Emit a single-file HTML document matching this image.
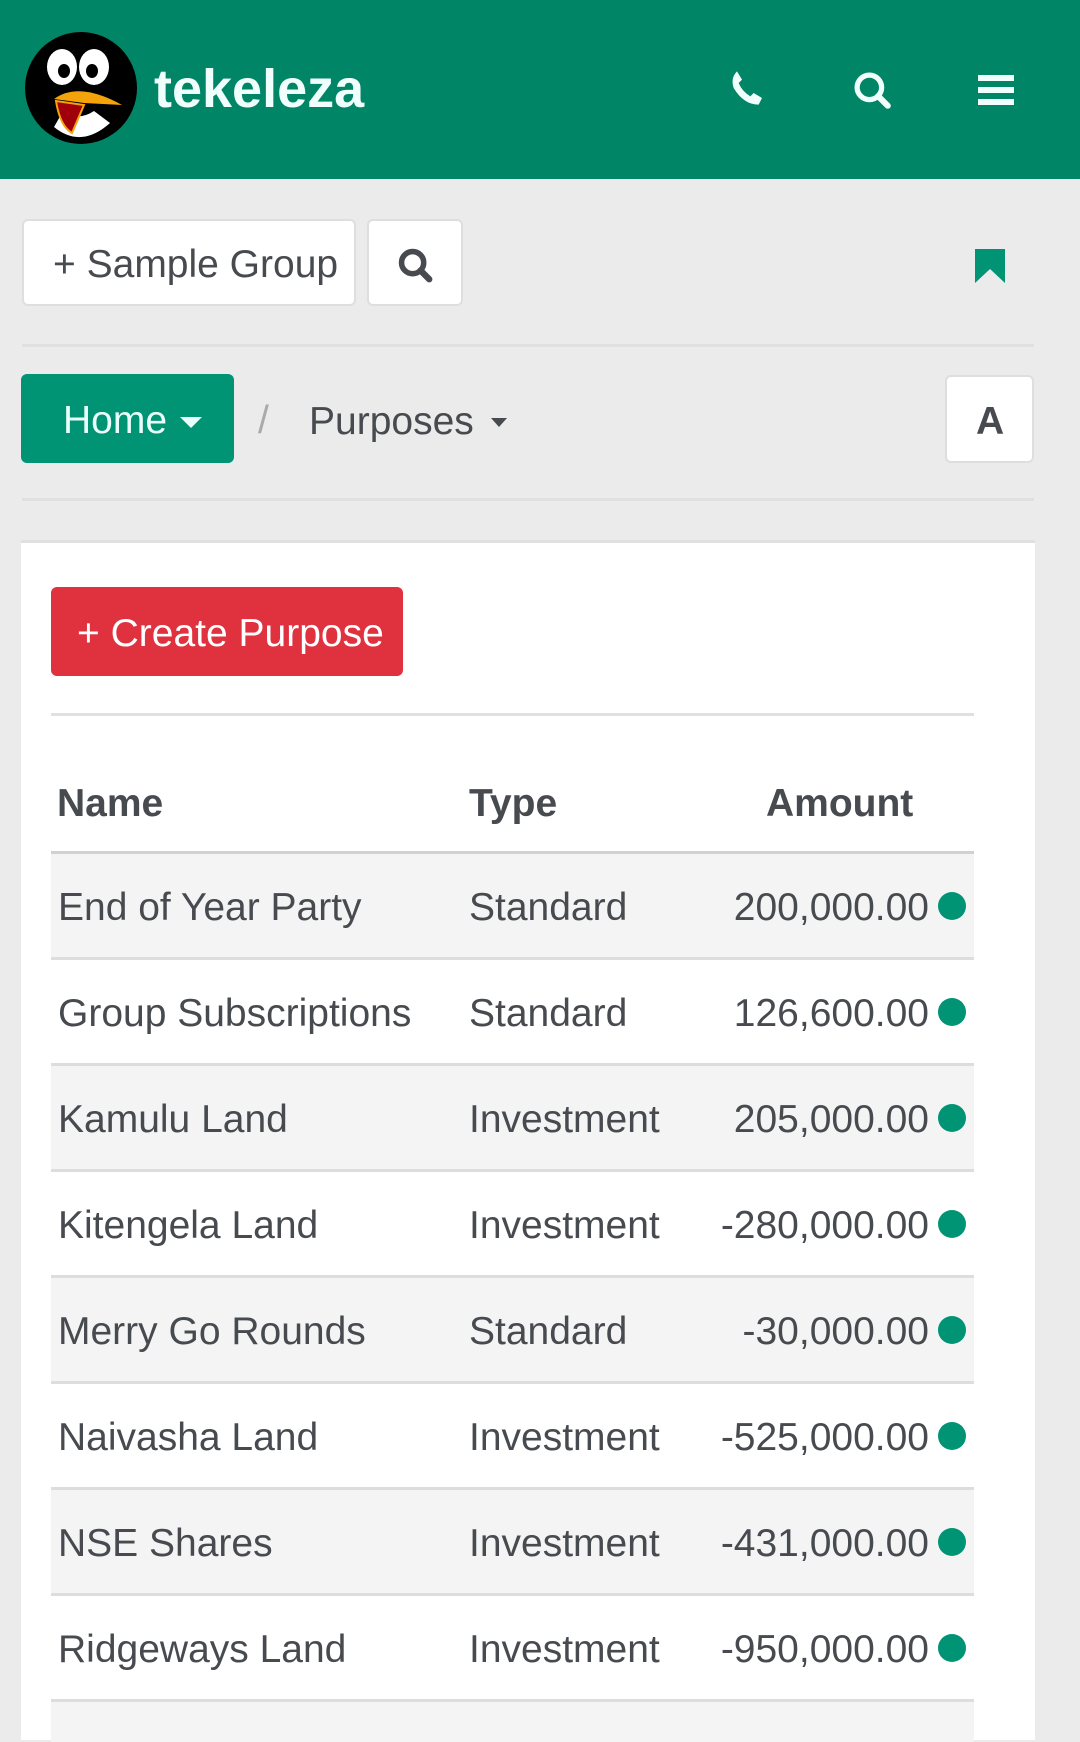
<!DOCTYPE html>
<html><head><meta charset="utf-8"><style>
*{box-sizing:border-box;margin:0;padding:0}
body{width:1080px;height:1733px;overflow:hidden;background:#ebebeb;font-family:"Liberation Sans",sans-serif;color:#474a4f;position:relative}
.a{position:absolute}
.hdr{left:0;top:0;width:1080px;height:179px;background:#008567}
.btn{background:#fff;border:2px solid #dcdee0;border-radius:6px}
.line{height:3px;background:#e0e0e0}
.t{font-size:39px;white-space:nowrap}
.row{left:51px;width:923px;height:106px;border-bottom:3px solid #dcdde0}
.row span{position:absolute;top:50%;transform:translateY(-46%);font-size:39px;white-space:nowrap;color:#474a4f}
.dot{position:absolute;left:887px;top:50%;margin-top:-14px;width:28px;height:28px;border-radius:50%;background:#009475}
</style></head><body>
<div class="a hdr"></div>
<svg class="a" style="left:24px;top:31px" width="114" height="114" viewBox="0 0 114 114">
<ellipse cx="57" cy="57" rx="56" ry="56" fill="#000"/>
<path d="M30 96 Q57 118 86 92 L70 80 Q55 90 38 82 Z" fill="#fff"/>
<ellipse cx="38" cy="36" rx="15" ry="18" fill="#fff"/><ellipse cx="70" cy="36" rx="15" ry="18" fill="#fff"/>
<ellipse cx="40" cy="40" rx="6" ry="7" fill="#000"/><ellipse cx="68" cy="40" rx="6" ry="7" fill="#000"/>
<path d="M30 68 Q55 50 98 74 L60 72 Z" fill="#f5a30a"/>
<path d="M32 70 L60 74 L48 102 Q36 95 32 70Z" fill="#a0000a" stroke="#f5a30a" stroke-width="2"/>
</svg>
<div class="a" style="left:154px;top:58px;font-size:54px;font-weight:bold;color:#f0fffb">tekeleza</div>
<svg class="a" style="left:727px;top:68px" width="40" height="40" viewBox="0 0 24 24"><path d="M6 2 L9 7 L7 9 Q9 14 14 17 L16 15 L21 18 L19 22 Q10 22 4 12 Q2 6 6 2Z" fill="#f0fffb"/></svg>
<svg class="a" style="left:851px;top:68px" width="42" height="44" viewBox="0 0 24 24"><circle cx="10.5" cy="10.5" r="7" fill="none" stroke="#f0fffb" stroke-width="3"/><path d="M15.5 15.5 L21 21" stroke="#f0fffb" stroke-width="3.5" stroke-linecap="round"/></svg>
<div class="a" style="left:978px;top:75px;width:36px;height:6px;background:#f0fffb"></div>
<div class="a" style="left:978px;top:87px;width:36px;height:6px;background:#f0fffb"></div>
<div class="a" style="left:978px;top:99px;width:36px;height:6px;background:#f0fffb"></div>

<div class="a btn" style="left:22px;top:219px;width:334px;height:87px"></div>
<div class="a t" style="left:53px;top:243px">+ Sample Group</div>
<div class="a btn" style="left:367px;top:219px;width:96px;height:87px"></div>
<svg class="a" style="left:396px;top:246px" width="38" height="38" viewBox="0 0 24 24"><circle cx="10.5" cy="10.5" r="7" fill="none" stroke="#474a4f" stroke-width="3.5"/><path d="M15.5 15.5 L21 21" stroke="#474a4f" stroke-width="4" stroke-linecap="round"/></svg>
<svg class="a" style="left:973px;top:247px" width="34" height="38" viewBox="0 0 34 38"><path d="M2 2 H32 V36 L17 22 L2 36Z" fill="#009475"/></svg>
<div class="a line" style="left:22px;top:344px;width:1012px"></div>

<div class="a" style="left:21px;top:374px;width:213px;height:89px;background:#009475;border-radius:6px"></div>
<div class="a t" style="left:63px;top:399px;color:#eafff9">Home</div>
<div class="a" style="left:180px;top:417px;border-left:11px solid transparent;border-right:11px solid transparent;border-top:11px solid #eafff9"></div>
<div class="a t" style="left:258px;top:399px;color:#aaa">/</div>
<div class="a t" style="left:309px;top:400px">Purposes</div>
<div class="a" style="left:491px;top:418px;border-left:8px solid transparent;border-right:8px solid transparent;border-top:9px solid #474a4f"></div>
<div class="a btn" style="left:945px;top:375px;width:89px;height:88px"></div>
<div class="a t" style="left:976px;top:400px;font-weight:bold">A</div>
<div class="a line" style="left:22px;top:498px;width:1012px"></div>

<div class="a" style="left:21px;top:540px;width:1014px;height:1200px;background:#fff;border-top:3px solid #e0e0e0"></div>
<div class="a" style="left:51px;top:587px;width:352px;height:89px;background:#e0313f;border-radius:6px"></div>
<div class="a t" style="left:77px;top:612px;color:#fff">+ Create Purpose</div>
<div class="a line" style="left:51px;top:713px;width:923px"></div>

<div class="a" style="left:51px;top:760px;width:923px;height:94px;border-bottom:3px solid #cfd1d4"></div>
<div class="a t" style="left:57px;top:782px;font-weight:bold">Name</div>
<div class="a t" style="left:469px;top:782px;font-weight:bold">Type</div>
<div class="a t" style="left:766px;top:782px;font-weight:bold">Amount</div>

<div class="a row" style="top:854px;background:#f4f4f4"><span style="left:7px">End of Year Party</span><span style="left:418px">Standard</span><span style="right:45px">200,000.00</span><div class="dot"></div></div>
<div class="a row" style="top:960px"><span style="left:7px">Group Subscriptions</span><span style="left:418px">Standard</span><span style="right:45px">126,600.00</span><div class="dot"></div></div>
<div class="a row" style="top:1066px;background:#f4f4f4"><span style="left:7px">Kamulu Land</span><span style="left:418px">Investment</span><span style="right:45px">205,000.00</span><div class="dot"></div></div>
<div class="a row" style="top:1172px"><span style="left:7px">Kitengela Land</span><span style="left:418px">Investment</span><span style="right:45px">-280,000.00</span><div class="dot"></div></div>
<div class="a row" style="top:1278px;background:#f4f4f4"><span style="left:7px">Merry Go Rounds</span><span style="left:418px">Standard</span><span style="right:45px">-30,000.00</span><div class="dot"></div></div>
<div class="a row" style="top:1384px"><span style="left:7px">Naivasha Land</span><span style="left:418px">Investment</span><span style="right:45px">-525,000.00</span><div class="dot"></div></div>
<div class="a row" style="top:1490px;background:#f4f4f4"><span style="left:7px">NSE Shares</span><span style="left:418px">Investment</span><span style="right:45px">-431,000.00</span><div class="dot"></div></div>
<div class="a row" style="top:1596px"><span style="left:7px">Ridgeways Land</span><span style="left:418px">Investment</span><span style="right:45px">-950,000.00</span><div class="dot"></div></div>
<div class="a" style="left:51px;top:1702px;width:923px;height:40px;background:#f4f4f4"></div>
</body></html>
